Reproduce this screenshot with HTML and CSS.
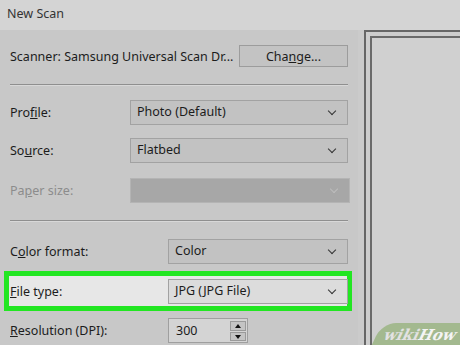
FILE: index.html
```html
<!DOCTYPE html>
<html lang="en">

<head>
    <meta charset="UTF-8">
    <meta name="viewport" content="width=device-width, initial-scale=1.0">
    <title>New Scan</title>
    <link rel="stylesheet" href="styles.css">
</head>

<body>
    <div class="window">
        <div class="titlebar">New Scan</div>

        <div class="main">
            <div class="settings">

                <div class="scanner-row">
                    <span>Scanner: Samsung Universal Scan Dr...</span>
                    <button class="btn">Cha<u>n</u>ge...</button>
                </div>

                <div class="sep"></div>

                <div class="field first">
                    <label>Pro<u>f</u>ile:</label>
                    <div class="select">Photo (Default)<span class="chev"></span></div>
                </div>
                <div class="field">
                    <label>So<u>u</u>rce:</label>
                    <div class="select">Flatbed<span class="chev"></span></div>
                </div>
                <div class="field disabled">
                    <label>Pa<u>p</u>er size:</label>
                    <div class="select off"><span class="chev"></span></div>
                </div>

                <div class="sep"></div>

                <div class="field wide first">
                    <label>C<u>o</u>lor format:</label>
                    <div class="select">Color<span class="chev"></span></div>
                </div>
                <div class="field wide marked">
                    <label><u>F</u>ile type:</label>
                    <div class="select">JPG (JPG File)<span class="chev"></span></div>
                </div>
                <div class="field wide last">
                    <label><u>R</u>esolution (DPI):</label>
                    <div class="spin">
                        <span>300</span>
                        <div class="spin-btns">
                            <div class="up"></div>
                            <div class="down"></div>
                        </div>
                    </div>
                </div>

            </div>

            <div class="preview">
                <div class="preview-inner"></div>
            </div>
        </div>

        <div class="wikihow"><span class="wiki">wiki</span>How</div>
    </div>
</body>

</html>
```

FILE: styles.css
```css
body {
    margin: 0;
    font-family: "Noto Sans", "Open Sans", sans-serif;
    font-size: 12.5px;
    color: #1c1c1c;
}

.window {
    width: 460px;
    height: 345px;
    overflow: hidden;
    background: #cbcbcb;
    position: relative;
}

.titlebar {
    height: 30px;
    line-height: 27px;
    padding-left: 7px;
    background: #d4d4d4;
    color: #333;
}

.main {
    display: flex;
    height: 315px;
}

.settings {
    width: 338px;
    padding: 0 10px;
    background: #c8c8c8;
}

.scanner-row {
    display: flex;
    align-items: center;
    justify-content: space-between;
    margin-top: 15px;
    height: 22px;
}

.btn {
    width: 109px;
    height: 22px;
    background: #c3c3c3;
    border: 1px solid #9c9c9c;
    font: inherit;
    color: #1c1c1c;
    padding: 0;
}

.sep {
    height: 1px;
    background: #8f8f8f;
    border-bottom: 1px solid #d8d8d8;
    margin-top: 17px;
}

.field {
    display: grid;
    grid-template-columns: 120px 1fr;
    align-items: center;
    height: 25px;
    margin-top: 13px;
}

.field.first {
    margin-top: 14px;
}

.field.wide {
    grid-template-columns: 158px 1fr;
}

.field.wide.first {
    margin-top: 17px;
}

.field.disabled {
    margin-top: 15px;
    color: #8c8c8c;
}

.field.last {
    margin-top: 7px;
}

.select {
    position: relative;
    height: 23px;
    line-height: 22px;
    padding-left: 6px;
    background: #c2c2c2;
    border: 1px solid #a2a2a2;
}

.select.off {
    background: #a7a7a7;
    border-color: #b4b4b4;
    margin-right: -2px;
}

.chev {
    position: absolute;
    right: 12px;
    top: 7px;
    width: 5px;
    height: 5px;
    border-right: 1.5px solid #333;
    border-bottom: 1.5px solid #333;
    transform: rotate(45deg);
}

.off .chev {
    border-color: #bdbdbd;
}

.marked {
    margin: 7px -4px 0 -6px;
    padding: 0 0 0 1px;
    height: 30px;
    border: 5px solid #22e622;
    background: #e7e7e7;
    grid-template-columns: 158px 1fr;
}

.marked .select {
    margin-right: -1px;
    background: #dcdcdc;
}

.spin {
    display: flex;
    justify-content: space-between;
    width: 80px;
    height: 25px;
    box-sizing: border-box;
    padding: 2px 1px 1px 7px;
    line-height: 20px;
    background: #d4d4d4;
    border: 1px solid #9f9f9f;
}

.spin-btns {
    display: flex;
    flex-direction: column;
    gap: 1px;
}

.spin-btns div {
    width: 16px;
    height: 10px;
    background: #c4c4c4;
    border: 1px solid #9a9a9a;
    box-sizing: border-box;
    position: relative;
}

.spin-btns .up::after,
.spin-btns .down::after {
    content: "";
    position: absolute;
    left: 4px;
    border-left: 3.5px solid transparent;
    border-right: 3.5px solid transparent;
}

.spin-btns .up::after {
    top: 2px;
    border-bottom: 4px solid #111;
}

.spin-btns .down::after {
    top: 2px;
    border-top: 4px solid #111;
}

.preview {
    flex: 1;
    margin-left: 6px;
    border-left: 2px solid #666;
    border-top: 2px solid #666;
    padding: 4px 0 0 4px;
    background: #cdcdcd;
}

.preview-inner {
    height: 100%;
    border-left: 2px solid #6a6a6a;
    border-top: 2px solid #6a6a6a;
    background: #d0d0d0;
}

.wikihow {
    position: absolute;
    right: -6px;
    bottom: -4px;
    width: 82px;
    height: 26px;
    padding-left: 8px;
    border-radius: 14px 0 0 0;
    transform: skewX(-25deg);
    background: #a3b98f;
    font-family: "DejaVu Serif", serif;
    font-weight: bold;
    font-size: 15px;
    line-height: 24px;
    color: #f4f4f4;
}

.wiki {
    color: #e2e2e2;
}
```
